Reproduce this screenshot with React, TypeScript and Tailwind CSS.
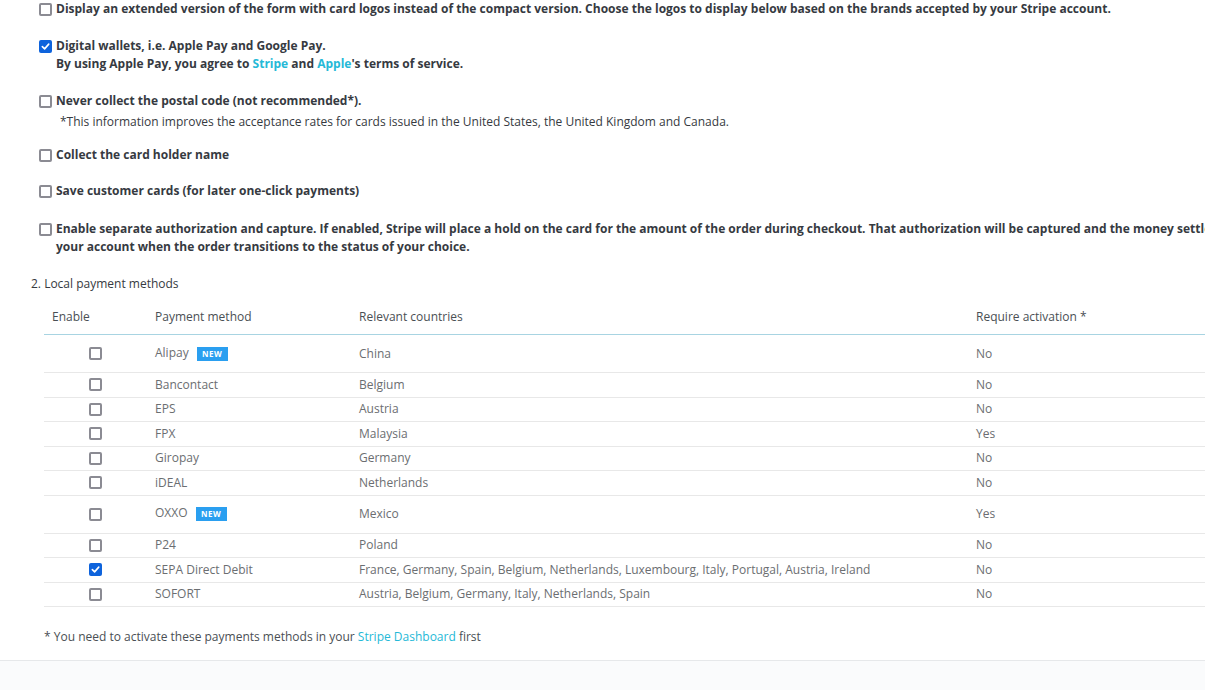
import React from "react";

type Method = {
  name: string;
  countries: string;
  activation: string;
  isNew?: boolean;
  checked?: boolean;
};

const methods: Method[] = [
  { name: "Alipay", countries: "China", activation: "No", isNew: true },
  { name: "Bancontact", countries: "Belgium", activation: "No" },
  { name: "EPS", countries: "Austria", activation: "No" },
  { name: "FPX", countries: "Malaysia", activation: "Yes" },
  { name: "Giropay", countries: "Germany", activation: "No" },
  { name: "iDEAL", countries: "Netherlands", activation: "No" },
  { name: "OXXO", countries: "Mexico", activation: "Yes", isNew: true },
  { name: "P24", countries: "Poland", activation: "No" },
  {
    name: "SEPA Direct Debit",
    countries:
      "France, Germany, Spain, Belgium, Netherlands, Luxembourg, Italy, Portugal, Austria, Ireland",
    activation: "No",
    checked: true,
  },
  { name: "SOFORT", countries: "Austria, Belgium, Germany, Italy, Netherlands, Spain", activation: "No" },
];

// mimics the grey / blue chrome-style checkbox from the screenshot
function Box({ checked, className = "" }: { checked?: boolean; className?: string }) {
  if (checked) {
    return (
      <span
        className={`flex h-[13px] w-[13px] shrink-0 items-center justify-center rounded-[2px] bg-[#0e63dc] ${className}`}
      >
        <svg width="9" height="9" viewBox="0 0 10 10" fill="none">
          <path d="M1.5 5.2 L4 7.6 L8.6 2.4" stroke="white" strokeWidth="1.8" strokeLinecap="round" strokeLinejoin="round" />
        </svg>
      </span>
    );
  }
  return (
    <span
      className={`block h-[13px] w-[13px] shrink-0 rounded-[2px] border-2 border-[#8b8b93] bg-white ${className}`}
    />
  );
}

function Option({
  checked,
  children,
  className = "",
}: {
  checked?: boolean;
  children: React.ReactNode;
  className?: string;
}) {
  return (
    <label className={`flex items-start gap-[4px] pl-[39px] ${className}`}>
      <Box checked={checked} className="mt-[3px]" />
      <span className="text-[12px] leading-[18px] font-bold text-[#363a41] whitespace-nowrap">
        {children}
      </span>
    </label>
  );
}

function NewBadge() {
  return (
    <span className="ml-[8px] inline-flex h-[14px] w-[31px] items-center justify-center bg-[#2a9ff0] text-[8px] font-bold tracking-[0.5px] text-white">
      NEW
    </span>
  );
}

export default function App() {
  return (
    <div
      className="w-full overflow-hidden bg-white"
      style={{ fontFamily: '"Open Sans", "Liberation Sans", sans-serif' }}
    >
      <div className="w-[1320px]">
        <Option>
          Display an extended version of the form with card logos instead of the compact version. Choose the logos to
          display below based on the brands accepted by your Stripe account.
        </Option>

        <Option checked className="mt-[19px]">
          Digital wallets, i.e. Apple Pay and Google Pay.
          <br />
          By using Apple Pay, you agree to <span className="text-[#25b9d7]">Stripe</span> and{" "}
          <span className="text-[#25b9d7]">Apple</span>'s terms of service.
        </Option>

        <Option className="mt-[19px]">Never collect the postal code (not recommended*).</Option>
        <p className="mt-[3px] pl-[60px] text-[12px] leading-[18px] text-[#363a41]">
          *This information improves the acceptance rates for cards issued in the United States, the United Kingdom and
          Canada.
        </p>

        <Option className="mt-[15px]">Collect the card holder name</Option>

        <Option className="mt-[18px]">Save customer cards (for later one-click payments)</Option>

        <Option className="mt-[20px]">
          Enable separate authorization and capture. If enabled, Stripe will place a hold on the card for the amount of
          the order during checkout. That authorization will be captured and the money settled in
          <br />
          your account when the order transitions to the status of your choice.
        </Option>

        <p className="mt-[19px] pl-[31px] text-[12px] leading-[18px] text-[#363a41]">2. Local payment methods</p>

        <div className="ml-[44px] mt-[7px] text-[12px] leading-[18px]">
          <div className="flex h-[35px] items-center border-b border-[#a8d4e2] text-[#4a4f54]">
            <div className="w-[103px] pl-[8px]">Enable</div>
            <div className="w-[204px] pl-[8px]">Payment method</div>
            <div className="w-[617px] pl-[8px]">Relevant countries</div>
            <div className="flex-1 pl-[8px]">Require activation *</div>
          </div>

          {methods.map((m) => (
            <div
              key={m.name}
              className={`flex items-center border-b border-[#e8e8e8] text-[#6b6e71] ${
                m.isNew ? "h-[38px]" : "h-[24.5px]"
              }`}
            >
              <div className="flex w-[103px] justify-center">
                <Box checked={m.checked} />
              </div>
              <div className="flex w-[204px] items-center pl-[8px]">
                <span className={m.isNew ? "-mt-[2px]" : ""}>{m.name}</span>
                {m.isNew && <NewBadge />}
              </div>
              <div className="w-[617px] pl-[8px]">{m.countries}</div>
              <div className="flex-1 pl-[8px]">{m.activation}</div>
            </div>
          ))}
        </div>

        <p className="mt-[21px] pl-[44px] text-[12px] leading-[18px] text-[#4a4f54]">
          * You need to activate these payments methods in your{" "}
          <span className="text-[#25b9d7]">Stripe Dashboard</span> first
        </p>

        <div className="mt-[14px] h-[40px] border-t border-[#e6e8ea] bg-[#fafbfc]" />
      </div>
    </div>
  );
}
